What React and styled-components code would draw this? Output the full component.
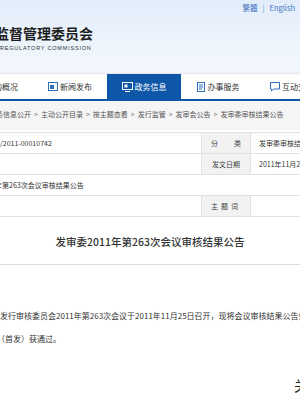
import React from "react";
import styled, { createGlobalStyle } from "styled-components";

const GlobalStyle = createGlobalStyle`
  html, body {
    margin: 0;
    padding: 0;
    background: #ffffff;
    overflow: hidden;
  }
  body {
    font-family: "Noto Sans CJK SC", "Noto Sans", sans-serif;
    color: #333;
  }
`;

const NAV_ITEMS = [
  { key: "about", label: "机构概况", icon: "screen" },
  { key: "news", label: "新闻发布", icon: "news" },
  { key: "gov", label: "政务信息", icon: "monitor", active: true },
  { key: "service", label: "办事服务", icon: "doc" },
  { key: "talk", label: "互动交流", icon: "chat" },
];

const CRUMBS = ["政务信息公开", "主动公开目录", "按主题查看", "发行监管", "发审会公告", "发审委审核结果公告"];

const NavIcon = ({ type, light }) => {
  const c = light ? "#ffffff" : "#2f6dbf";
  if (type === "news") {
    return (
      <svg width="10" height="9" viewBox="0 0 10 9">
        <rect x="0.5" y="0.5" width="9" height="8" fill="none" stroke={c} strokeWidth="1" />
        <rect x="2" y="3" width="4" height="4" fill={c} />
      </svg>
    );
  }
  if (type === "monitor") {
    return (
      <svg width="11" height="10" viewBox="0 0 11 10">
        <rect x="0.5" y="0.5" width="10" height="7" fill="none" stroke={c} strokeWidth="1" />
        <rect x="2.5" y="2.5" width="3" height="3" fill={c} />
        <path d="M3 9.5h5" stroke={c} strokeWidth="1" />
      </svg>
    );
  }
  if (type === "doc") {
    return (
      <svg width="9" height="10" viewBox="0 0 9 10">
        <rect x="0.5" y="0.5" width="7" height="9" fill="none" stroke={c} strokeWidth="1" />
        <path d="M2 3h4M2 5h4M2 7h3" stroke={c} strokeWidth="1" />
      </svg>
    );
  }
  if (type === "chat") {
    return (
      <svg width="10" height="10" viewBox="0 0 10 10">
        <path d="M0.5 0.5h9v6.5h-6l-2 2v-2h-1z" fill="none" stroke={c} strokeWidth="1" />
      </svg>
    );
  }
  return (
    <svg width="10" height="9" viewBox="0 0 10 9">
      <rect x="0.5" y="0.5" width="9" height="8" fill="none" stroke={c} strokeWidth="1" />
    </svg>
  );
};

const App = () => {
  return (
    <>
      <GlobalStyle />
      <Page>
        <Header>
          <TopLinks>
            <TopLink>繁體</TopLink>
            <Pipe>|</Pipe>
            <TopLink>English</TopLink>
          </TopLinks>
          <SiteTitle>中国证券监督管理委员会</SiteTitle>
          <SiteSub>REGULATORY COMMISSION</SiteSub>
        </Header>

        <Nav>
          {NAV_ITEMS.map((item) => (
            <NavItem key={item.key} $active={item.active}>
              <NavIcon type={item.icon} light={item.active} />
              <span>{item.label}</span>
            </NavItem>
          ))}
        </Nav>

        <Crumbs>
          {CRUMBS.map((c, i) => (
            <React.Fragment key={c}>
              {i > 0 && <CrumbSep>&gt;</CrumbSep>}
              <span>{c}</span>
            </React.Fragment>
          ))}
        </Crumbs>

        <InfoTable>
          <Cell>/2011-00010742</Cell>
          <LabelCell>
            <Spread>分</Spread>
            <Spread>类</Spread>
          </LabelCell>
          <Cell $right>发审委审核结果公告</Cell>

          <Cell />
          <LabelCell>发文日期</LabelCell>
          <Cell $right>2011年11月25日</Cell>

          <WideCell>
            <Cut $shift={-5}>年第263次会议审核结果公告</Cut>
          </WideCell>

          <Cell $last />
          <LabelCell $spaced>主题词</LabelCell>
          <Cell $right $last />
        </InfoTable>

        <DocTitle>发审委2011年第263次会议审核结果公告</DocTitle>

        <Body>
          <Para>发行审核委员会2011年第263次会议于2011年11月25日召开，现将会议审核结果公告如下：</Para>
          <Para>
            <Cut $shift={-3}>（首发）获通过。</Cut>
          </Para>
        </Body>

        <Closing>关于</Closing>
      </Page>
    </>
  );
};

const Page = styled.div`
  width: 300px;
  height: 400px;
  overflow: hidden;
  background: #ffffff;
`;

const Header = styled.div`
  height: 73px;
  box-sizing: border-box;
  padding-top: 3px;
  background: linear-gradient(180deg, #e2edfa 0%, #edf4fc 60%, #f4f8fd 100%);
  overflow: hidden;
`;

const TopLinks = styled.div`
  display: flex;
  justify-content: flex-end;
  align-items: center;
  gap: 5px;
  height: 10px;
  padding-right: 5px;
  font-size: 7.5px;
  line-height: 10px;
`;

const TopLink = styled.span`
  color: #3a72c0;
`;

const Pipe = styled.span`
  color: #7f9cc4;
`;

const SiteTitle = styled.div`
  margin-top: 12px;
  margin-left: -61px;
  height: 16px;
  font-size: 14px;
  line-height: 16px;
  font-weight: 700;
  color: #1e1e1e;
  white-space: nowrap;
`;

const SiteSub = styled.div`
  margin-top: 3px;
  height: 8px;
  font-family: "Liberation Sans", sans-serif;
  font-size: 5.5px;
  line-height: 8px;
  letter-spacing: 0.8px;
  color: #333;
  white-space: nowrap;
`;

const Nav = styled.div`
  display: flex;
  height: 25px;
  margin-left: -41px;
  background: #ffffff;
  border-top: 1px solid #e4e8ee;
  border-bottom: 2px solid #0e56a8;
  box-shadow: 0 -1px 2px rgba(0, 0, 0, 0.04);
`;

const NavItem = styled.div`
  flex: none;
  width: 74px;
  display: flex;
  justify-content: center;
  align-items: center;
  gap: 2px;
  font-size: 8px;
  color: ${(p) => (p.$active ? "#ffffff" : "#333")};
  background: ${(p) => (p.$active ? "#0e56a8" : "transparent")};
  white-space: nowrap;
`;

const Crumbs = styled.div`
  height: 29px;
  box-sizing: border-box;
  padding-top: 8px;
  margin-left: -11px;
  background: #f5f5f5;
  font-size: 7px;
  line-height: 10px;
  color: #555;
  white-space: nowrap;
`;

const CrumbSep = styled.span`
  margin: 0 3px;
  color: #777;
`;

const InfoTable = styled.div`
  margin-top: 2px;
  display: grid;
  grid-template-columns: 201px 50px 1fr;
  border-top: 1px solid #dde2e8;
  font-size: 7px;
  color: #333;
`;

const Cell = styled.div`
  height: 20px;
  display: flex;
  align-items: center;
  padding-left: ${(p) => (p.$right ? "8px" : "0")};
  border-bottom: 1px solid #dde2e8;
  white-space: nowrap;
  overflow: hidden;
`;

const WideCell = styled(Cell)`
  grid-column: 1 / span 3;
`;

const LabelCell = styled.div`
  height: 20px;
  display: flex;
  justify-content: center;
  align-items: center;
  letter-spacing: ${(p) => (p.$spaced ? "3px" : "0")};
  background: #f2f2f2;
  border-left: 1px solid #dde2e8;
  border-right: 1px solid #dde2e8;
  border-bottom: 1px solid #dde2e8;
  color: #444;
`;

const Spread = styled.span`
  margin: 0 8px;
`;

const Cut = styled.span`
  margin-left: ${(p) => p.$shift}px;
  white-space: nowrap;
`;

const DocTitle = styled.div`
  margin-top: 18px;
  padding-bottom: 15px;
  border-bottom: 1px solid #dcdcdc;
  text-align: center;
  font-size: 10.5px;
  line-height: 14px;
  font-weight: 500;
  color: #333;
  white-space: nowrap;
`;

const Body = styled.div`
  margin-top: 39px;
  font-size: 8px;
  line-height: 23px;
  color: #333;
`;

const Para = styled.div`
  white-space: nowrap;
`;

const Closing = styled.div`
  margin-top: 25px;
  margin-right: -22px;
  text-align: right;
  font-size: 14px;
  line-height: 20px;
  color: #222;
  white-space: nowrap;
`;

export default App;
